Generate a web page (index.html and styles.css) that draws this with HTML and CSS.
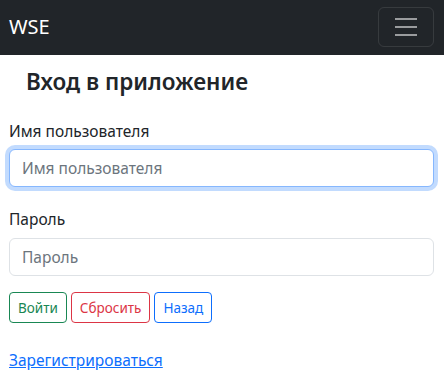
FILE: index.html
```html
<!DOCTYPE html>
<html lang="ru">
<head>
<meta charset="utf-8">
<link rel="stylesheet" href="styles.css">
</head>
<body>
<nav class="navbar">
  <span class="brand">WSE</span>
  <button class="toggler" type="button" aria-label="menu">
    <svg width="30" height="30" viewBox="0 0 30 30"><path stroke="rgba(255,255,255,0.55)" stroke-width="2" stroke-miterlimit="10" d="M4 7h22M4 15h22M4 23h22"/></svg>
  </button>
</nav>
<main class="content">
  <h4 class="title">Вход в приложение</h4>
  <div class="field">
    <label class="label">Имя пользователя</label>
    <input class="input focus" placeholder="Имя пользователя">
  </div>
  <div class="field">
    <label class="label">Пароль</label>
    <input class="input" type="password" placeholder="Пароль">
  </div>
  <div class="buttons">
    <button class="btn green">Войти</button>
    <button class="btn red">Сбросить</button>
    <button class="btn blue">Назад</button>
  </div>
  <a class="link" href="#">Зарегистрироваться</a>
</main>
</body>
</html>
```
FILE: styles.css
```css
* { box-sizing: border-box; }
html, body { margin: 0; padding: 0; }
body {
  font-family: "Noto Sans", "Open Sans", sans-serif;
  font-size: 16px;
  color: #212529;
  background: #fff;
  width: 444px;
}
.navbar {
  height: 55px;
  background: #212529;
  display: flex;
  align-items: center;
  justify-content: space-between;
  padding: 0 10px 0 9px;
}
.brand {
  color: #fff;
  font-size: 20px;
  line-height: 1;
  margin-top: -2px;
}
.toggler {
  width: 56px;
  height: 40px;
  margin-top: -1px;
  background: transparent;
  border: 1px solid rgba(255,255,255,0.1);
  border-radius: 6px;
  display: flex;
  align-items: center;
  justify-content: center;
  padding: 0;
}
.content {
  padding: 0 10px 0 9px;
  display: flex;
  flex-direction: column;
}
.title {
  margin: 12px 0 0 17px;
  font-size: 22.5px;
  font-weight: 600;
  line-height: 29px;
}
.field {
  display: flex;
  flex-direction: column;
}
.field:first-of-type { margin-top: 23px; }
.label {
  font-size: 15.5px;
  line-height: 24px;
  margin-bottom: 6px;
}
.field + .field { margin-top: 20px; }
.field + .field .label { margin-bottom: 7px; }
.input {
  height: 38px;
  border: 1px solid #dee2e6;
  border-radius: 6px;
  padding: 0 12px;
  font: inherit;
  font-size: 15.5px;
  color: #212529;
  outline: none;
}
.input::placeholder { color: #6c757d; }
.input.focus {
  border-color: #86b7fe;
  box-shadow: 0 0 0 4px rgba(13,110,253,0.25);
}
.buttons {
  display: flex;
  gap: 4px;
  margin-top: 16px;
}
.btn {
  height: 31px;
  padding: 0 8px;
  font: inherit;
  font-size: 13.5px;
  background: #fff;
  border: 1px solid;
  border-radius: 4px;
}
.green { color: #198754; border-color: #198754; }
.red { color: #dc3545; border-color: #dc3545; }
.blue { color: #0d6efd; border-color: #0d6efd; }
.link {
  margin-top: 25px;
  align-self: flex-start;
  color: #0d6efd;
  font-size: 15.5px;
  line-height: 24px;
  text-decoration: underline;
}
```
